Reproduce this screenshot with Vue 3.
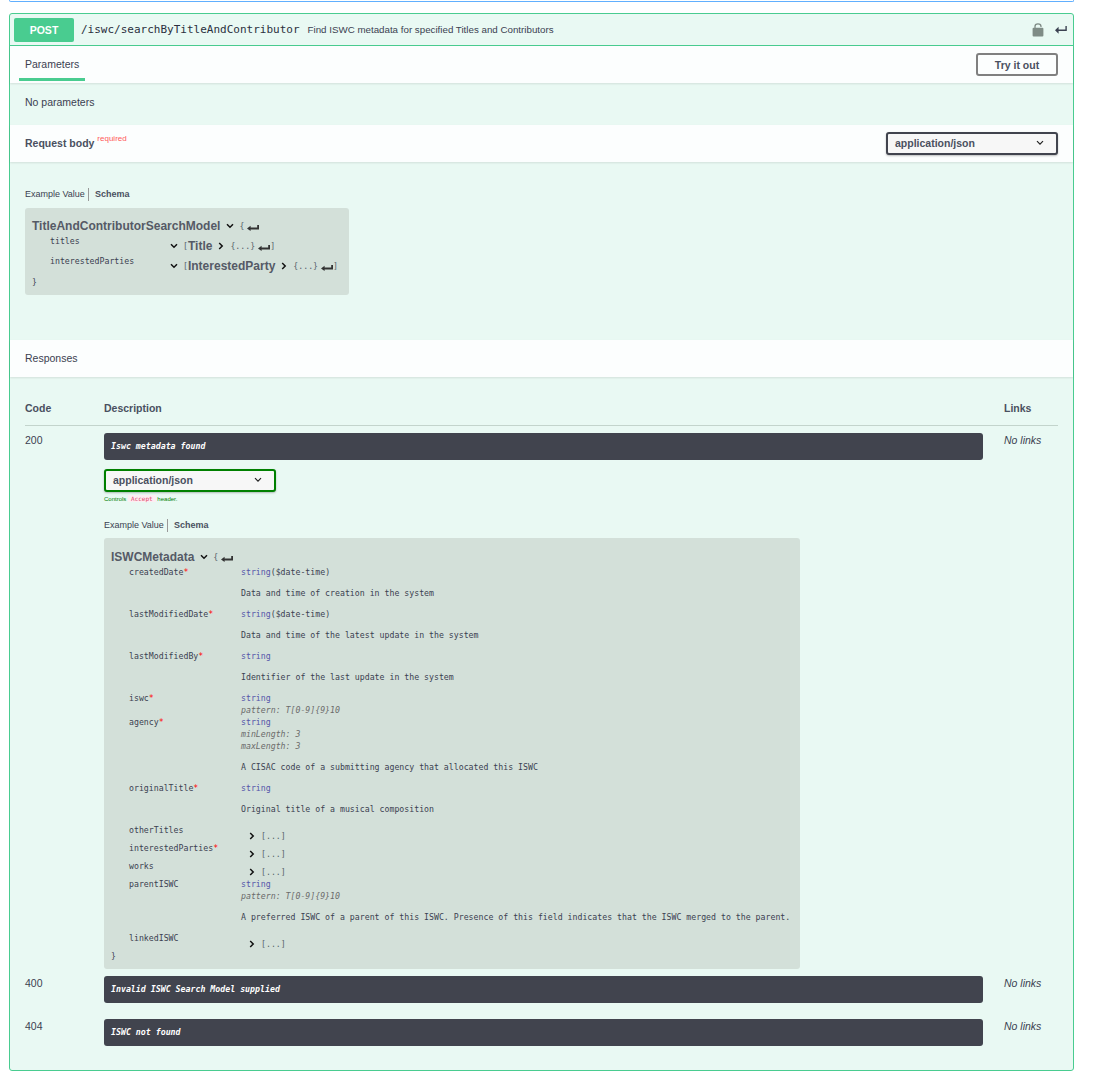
<template>
  <div class="page">
    <div class="prev-block"></div>

    <div class="opblock">
      <div class="summary">
        <span class="method">POST</span>
        <span class="path">/iswc/searchByTitleAndContributor</span>
        <span class="summary-text">Find ISWC metadata for specified Titles and Contributors</span>
        <svg class="lock" viewBox="0 0 12 14">
          <path d="M3 5.5V3.4C3 1.7 4.3.8 6 .8s3 .9 3 2.6V4" fill="none" stroke="#7f8c86" stroke-width="1.3" />
          <rect x="0.6" y="4.8" width="10.8" height="8.8" rx="1" fill="#7f8c86" />
        </svg>
        <svg class="arrow-head" viewBox="0 0 12 8">
          <path d="M10.4 0h1.4v5H3.6v2.8L0 4.2l3.6-3.4v2.8h6.8z" fill="#3b4151" />
        </svg>
      </div>

      <div class="section-head tabs">
        <div class="tab">Parameters</div>
        <button class="try-out">Try it out</button>
      </div>
      <div class="no-params">No parameters</div>

      <div class="section-head body-head">
        <div class="body-title">Request body <sup class="required">required</sup></div>
        <div class="select">
          <span>application/json</span>
          <svg viewBox="0 0 8 6" class="select-caret"><path d="M1 1.2l3 3 3-3" fill="none" stroke="#222" stroke-width="1.2" /></svg>
        </div>
      </div>

      <div class="body-content">
        <div class="example-tabs"><span class="ex-tab">Example Value</span><span class="ex-tab schema-tab">Schema</span></div>
        <div class="model-box small-box">
          <div class="model-line big">
            <span class="model-title">TitleAndContributorSearchModel</span>
            <svg class="chev down" viewBox="0 0 8 6"><path d="M1 1.2l3 3 3-3" /></svg>
            <span class="brace">{</span>
            <svg class="ret" viewBox="0 0 12 6"><path d="M10.2 0H12v4.4H3.6V6L0 3.4 3.6.8v1.8h6.6z" /></svg>
          </div>
          <div class="ref-row">
            <span class="ref-key">titles</span>
            <span class="ref-val">
              <svg class="chev down" viewBox="0 0 8 6"><path d="M1 1.2l3 3 3-3" /></svg>
              <span class="brace">[</span><span class="model-title">Title</span>
              <svg class="chev right" viewBox="0 0 6 8"><path d="M1.2 1l3 3-3 3" /></svg>
              <span class="brace">{...}</span>
              <svg class="ret" viewBox="0 0 12 6"><path d="M10.2 0H12v4.4H3.6V6L0 3.4 3.6.8v1.8h6.6z" /></svg>
              <span class="brace">]</span>
            </span>
          </div>
          <div class="ref-row">
            <span class="ref-key">interestedParties</span>
            <span class="ref-val">
              <svg class="chev down" viewBox="0 0 8 6"><path d="M1 1.2l3 3 3-3" /></svg>
              <span class="brace">[</span><span class="model-title">InterestedParty</span>
              <svg class="chev right" viewBox="0 0 6 8"><path d="M1.2 1l3 3-3 3" /></svg>
              <span class="brace">{...}</span>
              <svg class="ret" viewBox="0 0 12 6"><path d="M10.2 0H12v4.4H3.6V6L0 3.4 3.6.8v1.8h6.6z" /></svg>
              <span class="brace">]</span>
            </span>
          </div>
          <div class="close-brace">}</div>
        </div>
      </div>

      <div class="section-head responses-head">Responses</div>

      <div class="responses">
        <div class="resp-grid heading">
          <div>Code</div>
          <div>Description</div>
          <div>Links</div>
        </div>

        <div class="resp-grid row-200">
          <div class="code">200</div>
          <div>
            <div class="desc">Iswc metadata found</div>
            <div class="select green">
              <span>application/json</span>
              <svg viewBox="0 0 8 6" class="select-caret"><path d="M1 1.2l3 3 3-3" fill="none" stroke="#222" stroke-width="1.2" /></svg>
            </div>
            <div class="controls">Controls <span class="accept">Accept</span> header.</div>
            <div class="example-tabs inner"><span class="ex-tab">Example Value</span><span class="ex-tab schema-tab">Schema</span></div>
            <div class="model-box large-box">
              <div class="model-line">
                <span class="model-title">ISWCMetadata</span>
                <svg class="chev down" viewBox="0 0 8 6"><path d="M1 1.2l3 3 3-3" /></svg>
                <span class="brace">{</span>
                <svg class="ret" viewBox="0 0 12 6"><path d="M10.2 0H12v4.4H3.6V6L0 3.4 3.6.8v1.8h6.6z" /></svg>
              </div>
              <div v-for="row in rows" :key="row.key" class="prop" :class="{ collapsed: row.collapsed }">
                <div class="prop-key">{{ row.key }}<span v-if="row.req" class="star">*</span></div>
                <div v-if="row.collapsed" class="prop-val array">
                  <svg class="chev right" viewBox="0 0 6 8"><path d="M1.2 1l3 3-3 3" /></svg>
                  <span class="brace">[...]</span>
                </div>
                <div v-else class="prop-val">
                  <div><span class="type">string</span><span v-if="row.format">({{ row.format }})</span></div>
                  <div v-for="m in row.meta" :key="m" class="meta">{{ m }}</div>
                  <div v-if="row.desc" class="prop-desc">{{ row.desc }}</div>
                </div>
              </div>
              <div class="close-brace">}</div>
            </div>
          </div>
          <div class="no-links">No links</div>
        </div>

        <div class="resp-grid row-plain">
          <div class="code">400</div>
          <div class="desc">Invalid ISWC Search Model supplied</div>
          <div class="no-links">No links</div>
        </div>

        <div class="resp-grid row-plain">
          <div class="code">404</div>
          <div class="desc">ISWC not found</div>
          <div class="no-links">No links</div>
        </div>
      </div>
    </div>
  </div>
</template>

<script setup>
const rows = [
  { key: 'createdDate', req: true, format: '$date-time', desc: 'Data and time of creation in the system' },
  { key: 'lastModifiedDate', req: true, format: '$date-time', desc: 'Data and time of the latest update in the system' },
  { key: 'lastModifiedBy', req: true, desc: 'Identifier of the last update in the system' },
  { key: 'iswc', req: true, meta: ['pattern: T[0-9]{9}10'] },
  { key: 'agency', req: true, meta: ['minLength: 3', 'maxLength: 3'], desc: 'A CISAC code of a submitting agency that allocated this ISWC' },
  { key: 'originalTitle', req: true, desc: 'Original title of a musical composition' },
  { key: 'otherTitles', collapsed: true },
  { key: 'interestedParties', req: true, collapsed: true },
  { key: 'works', collapsed: true },
  { key: 'parentISWC', meta: ['pattern: T[0-9]{9}10'], desc: 'A preferred ISWC of a parent of this ISWC. Presence of this field indicates that the ISWC merged to the parent.' },
  { key: 'linkedISWC', collapsed: true }
]
</script>

<style>
html,
body {
  background: #fff;
}
</style>

<style scoped>
.page {
  width: 1095px;
  box-sizing: border-box;
  padding: 0 21px 0 9px;
  font-family: "Liberation Sans", Arial, sans-serif;
  color: #3b4151;
}

.prev-block {
  height: 1px;
  border: 1px solid #61affe;
  border-top: 0;
  border-radius: 0 0 3px 3px;
  margin-bottom: 11px;
}

.opblock {
  border: 1px solid #49cc90;
  border-radius: 3px;
  background: #e9f9f3;
  height: 1058px;
  box-sizing: border-box;
}

.summary {
  display: flex;
  align-items: center;
  height: 32px;
  box-sizing: border-box;
  padding: 0 6px 0 4px;
  border-bottom: 1px solid #49cc90;
}

.method {
  width: 60px;
  height: 24px;
  line-height: 24px;
  text-align: center;
  background: #49cc90;
  border-radius: 2px;
  color: #fff;
  font-size: 10.5px;
  font-weight: 700;
}

.path {
  margin-left: 7px;
  font-family: "DejaVu Sans Mono", monospace;
  font-size: 11px;
  color: #2b3040;
}

.summary-text {
  margin-left: 8px;
  flex: 1;
  font-size: 9.75px;
}

.lock {
  width: 12px;
  height: 14px;
  margin-right: 11px;
}

.arrow-head {
  width: 12px;
  height: 8px;
}

.section-head {
  display: flex;
  align-items: center;
  justify-content: space-between;
  background: rgba(255, 255, 255, 0.85);
  box-shadow: 0 1px 2px rgba(0, 0, 0, 0.1);
  padding: 0 15px;
  font-size: 10.5px;
}

.tabs {
  height: 37px;
  padding-left: 9px;
}

.tab {
  align-self: stretch;
  padding: 0 6px;
  line-height: 36px;
  position: relative;
}

.tab::after {
  content: "";
  position: absolute;
  left: 0;
  right: 0;
  top: 32px;
  height: 3px;
  background: #49cc90;
}

.try-out {
  width: 82px;
  height: 23px;
  background: transparent;
  border: 2px solid #808080;
  border-radius: 3px;
  font: 700 10.5px "Liberation Sans", Arial, sans-serif;
  color: #4a5060;
  padding: 0;
}

.no-params {
  height: 42px;
  padding: 13px 15px 0;
  box-sizing: border-box;
  font-size: 10.5px;
  line-height: 13px;
}

.body-head {
  height: 37px;
}

.body-title {
  font-weight: 700;
  color: #4a5060;
  margin-top: -2px;
}

.required {
  color: #ff5a5a;
  font-size: 8px;
  font-weight: 400;
  position: relative;
  top: -1px;
  vertical-align: super;
  line-height: 0;
}

.select {
  display: flex;
  align-items: center;
  justify-content: space-between;
  width: 172px;
  height: 23px;
  box-sizing: border-box;
  padding: 0 12px 2px 7px;
  background: #f7f7f7;
  border: 2px solid #41444e;
  border-radius: 3px;
  box-shadow: 0 1px 2px rgba(0, 0, 0, 0.25);
  font-size: 10.5px;
  font-weight: 700;
  color: #4a5060;
}

.select.green {
  border-color: #008000;
  margin-top: 9px;
}

.select-caret {
  width: 8px;
  height: 6px;
}

.body-content {
  height: 178px;
  padding: 26px 15px 0;
  box-sizing: border-box;
}

.example-tabs {
  display: flex;
  align-items: center;
  height: 13px;
  font-size: 9px;
}

.ex-tab {
  line-height: 13px;
}

.schema-tab {
  margin-left: 3px;
  padding-left: 6px;
  border-left: 1px solid #999;
  font-weight: 700;
  color: #4a5060;
}

.model-box {
  background: #d3e0d9;
  border-radius: 3px;
  font-family: "DejaVu Sans Mono", monospace;
  font-size: 8.23px;
  line-height: 12px;
  color: #3b4151;
  box-sizing: border-box;
}

.small-box {
  width: 324px;
  height: 87px;
  margin-top: 7px;
  padding: 9px 7px 0;
}

.model-line {
  display: flex;
  align-items: center;
  height: 18px;
}

.model-line.big {
  margin-bottom: 1px;
}

.model-title {
  font-family: "Liberation Sans", Arial, sans-serif;
  font-size: 12px;
  font-weight: 700;
  color: #555a66;
  white-space: nowrap;
}

.brace {
  font-size: 8.23px;
  color: #55606a;
  white-space: nowrap;
}

.chev {
  fill: none;
  stroke: #111;
  stroke-width: 1.5;
  flex: none;
}

.chev.down {
  width: 8px;
  height: 6px;
  margin: 0 5px 0 6px;
}

.chev.right {
  width: 6px;
  height: 8px;
  margin: 0 6px 0 6px;
}

.ret {
  width: 12px;
  height: 6px;
  fill: #333;
  margin: 3px 0 0 3px;
  flex: none;
}

.ref-row {
  display: flex;
  height: 20px;
  padding-left: 18px;
}

.ref-key {
  width: 114px;
  flex: none;
  line-height: 12px;
  margin-top: -1px;
}

.ref-val {
  display: flex;
  align-items: center;
  height: 18px;
  margin-top: 1px;
}

.close-brace {
  line-height: 12px;
}

.responses-head {
  height: 37px;
  padding-bottom: 2px;
  box-sizing: border-box;
}

.responses {
  padding: 0 15px;
}

.resp-grid {
  display: grid;
  grid-template-columns: 79px 879px 1fr;
  font-size: 10.5px;
}

.resp-grid > :last-child {
  margin-left: 21px;
}

.heading {
  margin-top: 23px;
  padding-top: 1px;
  height: 24px;
  border-bottom: 1px solid #c3d4cc;
  line-height: 15px;
  font-weight: 700;
  color: #4a5060;
}

.row-200 {
  margin-top: 7px;
  padding-bottom: 7px;
}

.row-plain {
  padding-bottom: 16px;
}

.code {
  line-height: 14px;
}

.desc {
  height: 27px;
  line-height: 27px;
  background: #41444e;
  border-radius: 3px;
  color: #fff;
  padding: 0 7px;
  font-family: "DejaVu Sans Mono", monospace;
  font-size: 8.25px;
  font-style: italic;
  font-weight: 700;
}

.no-links {
  font-style: italic;
  line-height: 14px;
}

.controls {
  margin-top: 2px;
  font-size: 6px;
  line-height: 9px;
  color: #008000;
}

.accept {
  color: #e0456b;
  background: #fdeef2;
  padding: 0 3px;
  font-family: "DejaVu Sans Mono", monospace;
}

.inner {
  margin-top: 15px;
}

.large-box {
  margin-top: 6px;
  width: 696px;
  height: 431px;
  padding: 10px 7px 0;
}

.prop {
  display: flex;
  padding-left: 18px;
}

.prop-key {
  width: 112px;
  flex: none;
  white-space: nowrap;
}

.star {
  color: #f00;
}

.prop-val {
  color: #3b4151;
}

.prop-val.array {
  display: flex;
  align-items: center;
  height: 18px;
  padding: 6px 0 0 2px;
  box-sizing: border-box;
}

.collapsed {
  height: 18px;
}

.type {
  color: #55a;
}

.meta {
  font-style: italic;
  color: #6b6b6b;
}

.prop-desc {
  margin: 9px 0;
  white-space: nowrap;
}
</style>
